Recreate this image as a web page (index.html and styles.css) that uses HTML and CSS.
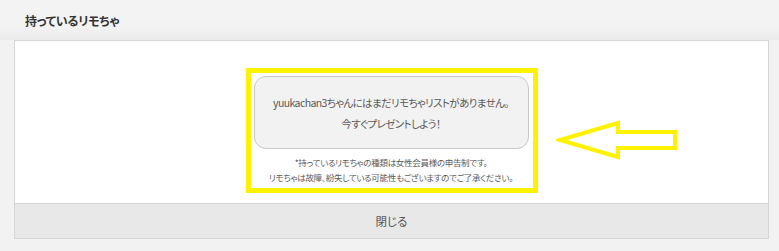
FILE: index.html
```html
<!DOCTYPE html>
<html lang="ja">
<head>
  <meta charset="UTF-8">
  <meta name="viewport" content="width=device-width, initial-scale=1">
  <title>持っているリモちゃ</title>
  <link rel="stylesheet" href="styles.css">
</head>
<body>

<div class="modal-head">
  <h2>持っているリモちゃ</h2>
</div>

<div class="panel">
  <div class="panel-body">
    <div class="highlight">
      <div class="empty-box">
        <p>yuukachan3ちゃんにはまだリモちゃリストがありません。</p>
        <p>今すぐプレゼントしよう！</p>
      </div>
      <div class="note">
        <p>*持っているリモちゃの種類は女性会員様の申告制です。</p>
        <p>リモちゃは故障、紛失している可能性もございますのでご了承ください。</p>
      </div>
    </div>

    <svg class="arrow" width="126" height="44" viewBox="0 0 126 44">
      <polygon points="4,22 62,5 62,14 119,14 119,30 62,30 62,39" fill="none" stroke="#fff200" stroke-width="4" stroke-linejoin="miter"/>
    </svg>
  </div>

  <a href="#" class="close-button">閉じる</a>
</div>

</body>
</html>
```

FILE: styles.css
```css
html, body {
  margin: 0;
  padding: 0;
  height: 100%;
  background: #f2f2f2;
  font-family: "Noto Sans CJK JP", "Noto Sans", sans-serif;
  font-feature-settings: "palt";
  color: #5a5a5a;
}
p {
  margin: 0;
  white-space: nowrap;
}
.modal-head {
  height: 40px;
  background: linear-gradient(to bottom, #f3f3f3 0, #f3f3f3 26px, #ebebeb 40px);
}
.modal-head h2 {
  margin: 0;
  padding: 13px 0 0 25px;
  font-size: 12px;
  line-height: 16px;
  font-weight: bold;
  color: #333;
  letter-spacing: -0.3px;
}
.panel {
  margin: 0 10px 0 14px;
  border: 1px solid #d6d6d6;
  background: #fff;
}
.panel-body {
  position: relative;
  height: 135px;
  padding-top: 27px;
  display: flex;
  justify-content: center;
}
.highlight {
  box-sizing: border-box;
  width: 292px;
  height: 125px;
  border: 5px solid #fff200;
  padding: 3px 4px 0 3px;
}
.empty-box {
  box-sizing: border-box;
  height: 73px;
  padding-top: 15px;
  border: 1px solid #c8c8c8;
  border-radius: 12px;
  background: #f2f2f2;
  text-align: center;
  font-size: 10.5px;
  letter-spacing: -0.6px;
  line-height: 21px;
}
.note {
  margin-top: 6px;
  text-align: center;
  font-size: 8.5px;
  letter-spacing: -0.3px;
  line-height: 15px;
}
.arrow {
  position: absolute;
  left: 541px;
  top: 77px;
}
.close-button {
  display: block;
  height: 34px;
  line-height: 34px;
  border-top: 1px solid #d6d6d6;
  background: #e8e8e8;
  text-align: center;
  font-size: 11.5px;
  color: #555;
  text-decoration: none;
}
```
